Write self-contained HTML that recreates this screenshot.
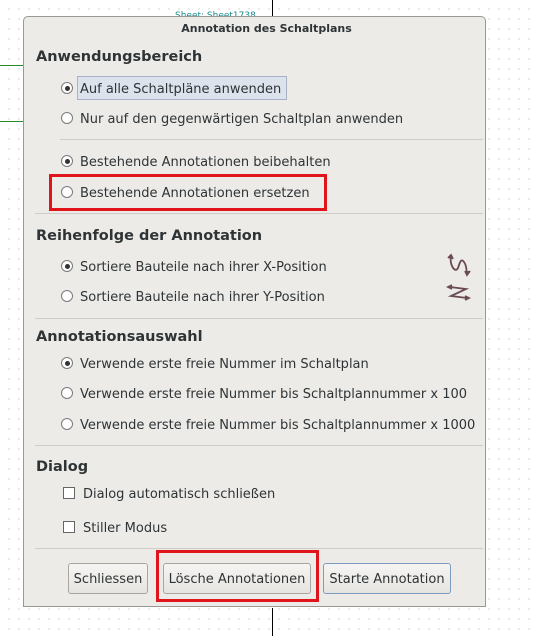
<!DOCTYPE html>
<html><head><meta charset="utf-8"><style>
body{margin:0;width:533px;height:636px;overflow:hidden;position:relative;font-family:"DejaVu Sans","Liberation Sans",sans-serif;
background-color:#fff;background-image:radial-gradient(circle,#b8b8b8 0.7px,transparent 0.8px);background-size:10px 10px;background-position:4px 4px}
.dlg{position:absolute;left:23px;top:16px;width:463px;height:591px;background:#edebe8;border:1px solid #9a9893;border-radius:5px 5px 0 0;box-sizing:border-box}
.t{position:absolute;white-space:nowrap;font-size:13px;color:#2e3436;margin-top:2px}
.h{position:absolute;white-space:nowrap;font-size:14.5px;font-weight:bold;color:#2e3436;margin-top:2px}
.r{position:absolute;width:10px;height:10px;border:1px solid #7a7a7a;border-radius:50%;background:#fff;box-sizing:content-box}
.r.on::after{content:"";position:absolute;left:2.5px;top:2.5px;width:5px;height:5px;border-radius:50%;background:#333}
.c{position:absolute;width:10px;height:10px;border:1px solid #666;background:#fff}
.sep{position:absolute;left:35px;width:448px;height:1px;background:#cfccc7}
.btn{position:absolute;top:563px;height:31px;border:1px solid #a9a6a0;border-radius:3px;background:linear-gradient(#f6f5f3,#e6e4e0);font-size:13px;color:#2e3436;line-height:32px;text-align:center;box-sizing:border-box}
.red{position:absolute;border:3px solid #e0141b;box-sizing:border-box}
</style></head><body>
<div style="position:absolute;left:0;top:65px;width:23px;height:1px;background:#2a8a2a"></div>
<div style="position:absolute;left:0;top:121px;width:23px;height:1px;background:#2a8a2a"></div>
<div style="position:absolute;left:272px;top:0;width:1px;height:16px;background:#000"></div>
<div style="position:absolute;left:272px;top:608px;width:1px;height:28px;background:#000"></div>
<div class="t" style="left:175px;top:9px;font-size:9px;color:#1a8a8a">Sheet: Sheet1738...</div>
<div class="dlg"></div>
<div class="t" style="left:0;width:533px;text-align:center;top:20px;font-size:11px;font-weight:bold">Annotation des Schaltplans</div>

<div class="h" style="left:36px;top:47px">Anwendungsbereich</div>
<div style="position:absolute;left:77px;top:76px;width:210px;height:24px;background:#dde3ec;border:1px solid #a8b4c6;box-sizing:border-box"></div>
<div class="r on" style="left:61px;top:82px"></div><div class="t" style="left:80px;top:80px">Auf alle Schaltpläne anwenden</div>
<div class="r" style="left:61px;top:112px"></div><div class="t" style="left:80px;top:110px">Nur auf den gegenwärtigen Schaltplan anwenden</div>
<div class="sep" style="top:139px;left:60px;width:423px"></div>
<div class="r on" style="left:61px;top:155px"></div><div class="t" style="left:80px;top:153px">Bestehende Annotationen beibehalten</div>
<div class="r" style="left:61px;top:186px"></div><div class="t" style="left:80px;top:184px">Bestehende Annotationen ersetzen</div>
<div class="red" style="left:49px;top:174px;width:278px;height:37px"></div>
<div class="sep" style="top:213px"></div>

<div class="h" style="left:36px;top:226px">Reihenfolge der Annotation</div>
<div class="r on" style="left:61px;top:260px"></div><div class="t" style="left:80px;top:258px">Sortiere Bauteile nach ihrer X-Position</div>
<div class="r" style="left:61px;top:290px"></div><div class="t" style="left:80px;top:288px">Sortiere Bauteile nach ihrer Y-Position</div>
<svg style="position:absolute;left:446px;top:252px" width="28" height="52" viewBox="0 0 28 52" fill="none" stroke="#6a4a55" stroke-width="1.8">
<path d="M5 4 C3 12,9 22,12 16 C14 10,15 6,18 10 C21 14,20 18,21 21"/><path d="M2 6 L5 3 L7 7" fill="#6a4a55"/><path d="M19 19 L21 23 L24 19" fill="#6a4a55"/>
<path d="M4 35 L20 37 L5 44 L21 46"/><path d="M6 33 L2 35 L6 37" fill="#6a4a55"/><path d="M19 44 L23 46 L19 48" fill="#6a4a55"/>
</svg>
<div class="sep" style="top:318px"></div>

<div class="h" style="left:36px;top:327px">Annotationsauswahl</div>
<div class="r on" style="left:61px;top:357px"></div><div class="t" style="left:80px;top:355px">Verwende erste freie Nummer im Schaltplan</div>
<div class="r" style="left:61px;top:387px"></div><div class="t" style="left:80px;top:385px">Verwende erste freie Nummer bis Schaltplannummer x 100</div>
<div class="r" style="left:61px;top:418px"></div><div class="t" style="left:80px;top:416px">Verwende erste freie Nummer bis Schaltplannummer x 1000</div>
<div class="sep" style="top:445px"></div>

<div class="h" style="left:36px;top:457px">Dialog</div>
<div class="c" style="left:63px;top:487px"></div><div class="t" style="left:83px;top:485px">Dialog automatisch schließen</div>
<div class="c" style="left:63px;top:521px"></div><div class="t" style="left:83px;top:519px">Stiller Modus</div>
<div class="sep" style="top:548px"></div>

<div class="btn" style="left:68px;width:80px">Schliessen</div>
<div class="btn" style="left:163px;width:148px">Lösche Annotationen</div>
<div class="btn" style="left:323px;width:128px;border-color:#7f9cc0">Starte Annotation</div>
<div class="red" style="left:156px;top:550px;width:163px;height:52px"></div>
</body></html>
